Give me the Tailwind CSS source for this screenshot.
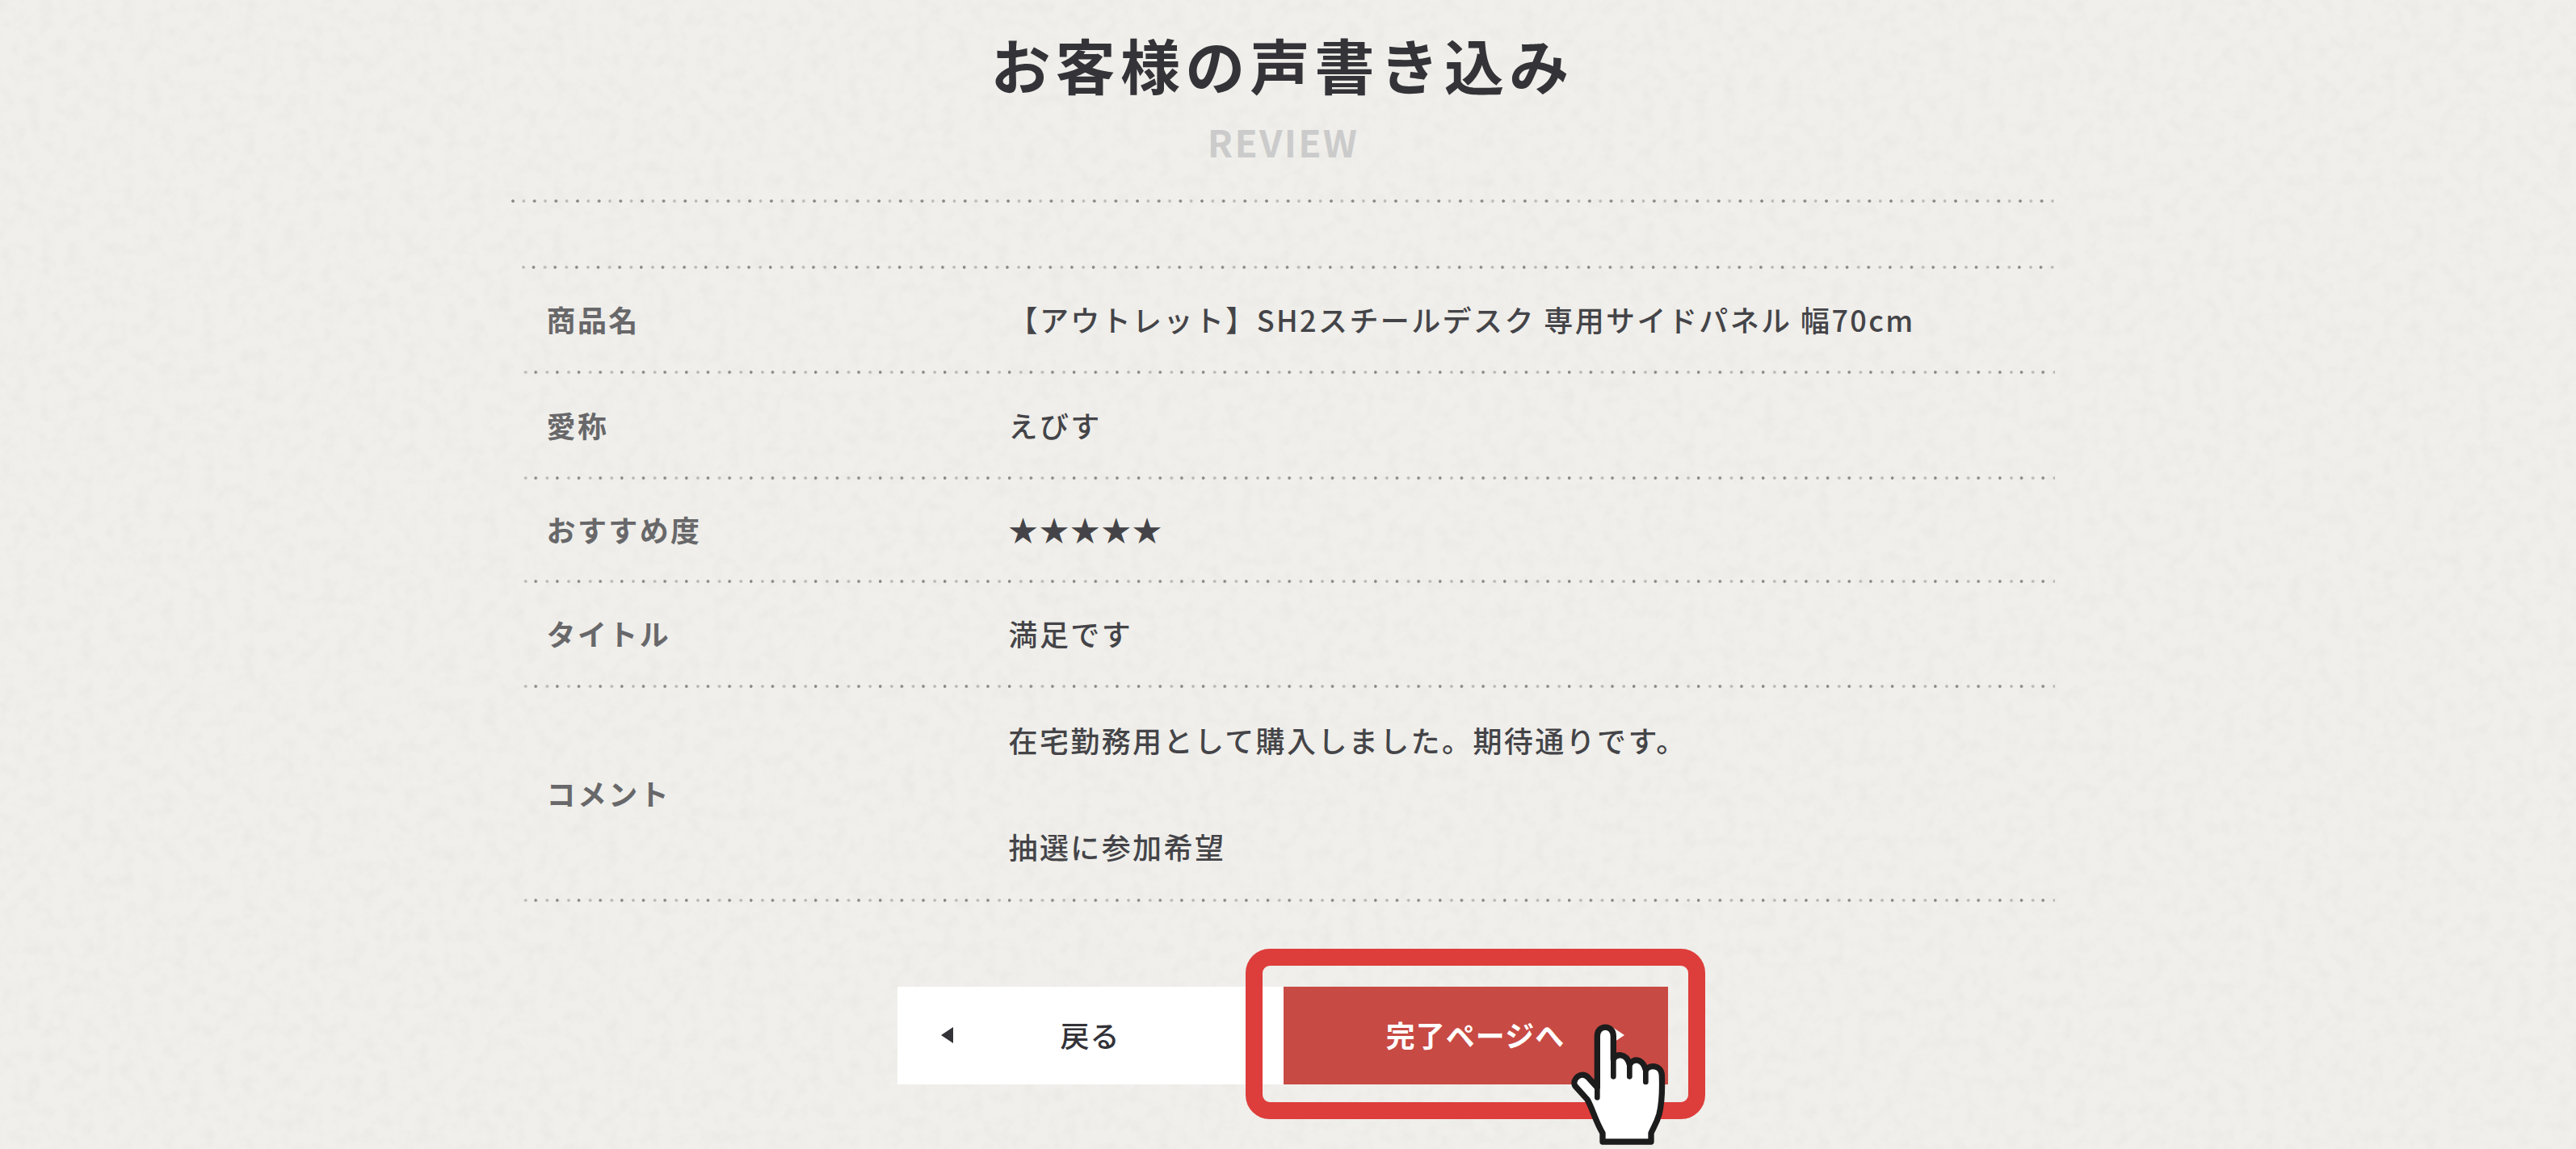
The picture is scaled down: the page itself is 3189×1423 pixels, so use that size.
<!DOCTYPE html>
<html lang="ja"><head><meta charset="utf-8"><title>REVIEW</title>
<script src="https://cdn.jsdelivr.net/npm/@tailwindcss/browser@4"></script></head>
<body class="bg-[#f0efeb] font-['Noto_Sans_CJK_JP','Noto_Sans',sans-serif]">
<div class="relative w-[3189px] h-[1423px] overflow-hidden">
<svg class="absolute inset-0 w-full h-full" aria-hidden="true"><filter id="n"><feTurbulence type="fractalNoise" baseFrequency="0.06" numOctaves="3" seed="4"/><feColorMatrix values="0 0 0 0 0.55 0 0 0 0 0.54 0 0 0 0 0.5 1.2 0 0 0 -0.5"/></filter><rect width="100%" height="100%" filter="url(#n)" opacity="0.2"/></svg>
<main class="relative flex flex-col items-center">
  <h1 class="mt-[32px] ml-[-14px] h-[94px] text-[74px] leading-[94px] font-bold tracking-[6.2px] text-[#333338]">お客様の声書き込み</h1>
  <p class="mt-[14px] ml-[-12px] h-[70px] text-[46px] leading-[70px] font-bold tracking-[2.3px] text-[#cbcbcb]">REVIEW</p>
  <div class="mt-[37px] ml-[-15px] w-[1911px] h-[4px] bg-[radial-gradient(circle_at_3px_2px,#8a8a88_1.5px,transparent_2.2px),radial-gradient(circle_at_16.33px_2px,#bbbbb8_1.5px,transparent_2.2px)] bg-[length:26.67px_4px] bg-repeat-x"></div>
  <div class="mt-[78px] w-[1898px] text-[36px] leading-[48px] font-medium tracking-[2.4px] text-[#444448]">
    <div class="h-[4px] bg-[radial-gradient(circle_at_14.5px_2px,#8a8a88_1.5px,transparent_2.2px),radial-gradient(circle_at_2px_2px,#bbbbb8_1.5px,transparent_2.2px)] bg-[length:26.67px_4px] bg-repeat-x"></div>
    <div class="flex items-center h-[130px] pb-[6px] bg-[radial-gradient(circle_at_14.5px_2px,#8a8a88_1.5px,transparent_2.2px),radial-gradient(circle_at_2px_2px,#bbbbb8_1.5px,transparent_2.2px)] bg-[length:26.67px_4px] bg-repeat-x bg-bottom"><div class="w-[603px] pl-[31px] font-bold text-[#68686a]">商品名</div><div>【アウトレット】SH2スチールデスク 専用サイドパネル 幅70cm</div></div>
    <div class="flex items-center h-[131px] pb-[6px] bg-[radial-gradient(circle_at_14.5px_2px,#8a8a88_1.5px,transparent_2.2px),radial-gradient(circle_at_2px_2px,#bbbbb8_1.5px,transparent_2.2px)] bg-[length:26.67px_4px] bg-repeat-x bg-bottom"><div class="w-[603px] pl-[31px] font-bold text-[#68686a]">愛称</div><div>えびす</div></div>
    <div class="flex items-center h-[128px] pb-[6px] bg-[radial-gradient(circle_at_14.5px_2px,#8a8a88_1.5px,transparent_2.2px),radial-gradient(circle_at_2px_2px,#bbbbb8_1.5px,transparent_2.2px)] bg-[length:26.67px_4px] bg-repeat-x bg-bottom"><div class="w-[603px] pl-[31px] font-bold text-[#68686a]">おすすめ度</div><div>★★★★★</div></div>
    <div class="flex items-center h-[130px] pb-[6px] bg-[radial-gradient(circle_at_14.5px_2px,#8a8a88_1.5px,transparent_2.2px),radial-gradient(circle_at_2px_2px,#bbbbb8_1.5px,transparent_2.2px)] bg-[length:26.67px_4px] bg-repeat-x bg-bottom"><div class="w-[603px] pl-[31px] font-bold text-[#68686a]">タイトル</div><div>満足です</div></div>
    <div class="flex items-center h-[265px] pb-[6px] bg-[radial-gradient(circle_at_14.5px_2px,#8a8a88_1.5px,transparent_2.2px),radial-gradient(circle_at_2px_2px,#bbbbb8_1.5px,transparent_2.2px)] bg-[length:26.67px_4px] bg-repeat-x bg-bottom"><div class="w-[603px] pl-[31px] font-bold text-[#68686a]">コメント</div><div class="flex flex-col gap-[84px]"><div>在宅勤務用として購入しました。期待通りです。</div><div>抽選に参加希望</div></div></div>
  </div>
  <div class="mt-[105px] ml-[-14px] flex text-[36px] font-medium">
    <a class="relative flex items-center justify-center w-[478px] h-[121px] pb-[4px] bg-white tracking-[1px] text-[#333338]"><span class="absolute left-[54px] top-[50px] w-0 h-0 border-y-[10px] border-y-transparent border-r-[15px] border-r-[#333338]"></span>戻る</a>
    <a class="relative flex items-center justify-center w-[476px] h-[121px] pb-[4px] bg-[#c84a44] text-white font-bold tracking-[1px]">完了ページへ<span class="absolute right-[54px] top-[50px] w-0 h-0 border-y-[10px] border-y-transparent border-l-[15px] border-l-white"></span></a>
  </div>
</main>
<div class="absolute left-[1542px] top-[1175px] w-[569px] h-[211px] rounded-[30px] border-[21px] border-[#dd3d3b]"></div>
<svg class="absolute left-[1900px] top-[1240px] w-[240px] h-[183px]" viewBox="0 0 720 549" aria-hidden="true"><path d="M232 320V130C232 85 292 85 292 130V215C300 195 340 190 352 235C365 212 400 210 412 255C425 235 470 235 472 275C474 330 472 380 462 420C452 455 440 470 432 490V522H252V490C225 445 215 400 195 365L150 315C135 290 175 255 200 285Z" fill="#fff" stroke="#1c1c1c" stroke-width="22" stroke-linejoin="round"/><path d="M232 290V358M292 215V280M352 235V280M412 255V300" fill="none" stroke="#1c1c1c" stroke-width="20" stroke-linecap="round"/></svg>
</div>
</body></html>
